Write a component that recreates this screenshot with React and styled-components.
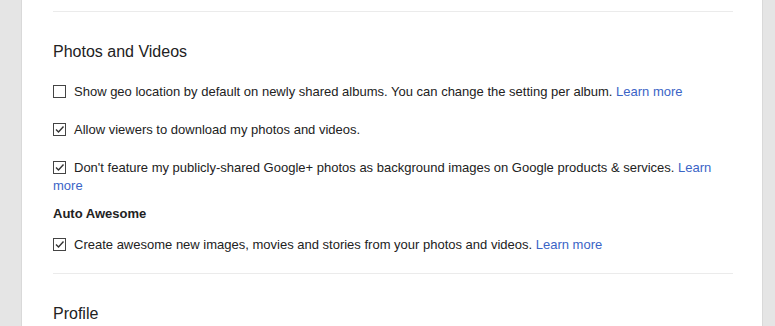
import React from 'react';
import styled, { createGlobalStyle } from 'styled-components';

const GlobalStyle = createGlobalStyle`
  html, body {
    margin: 0;
    padding: 0;
    background: #e5e5e5;
    font-family: Arial, "Liberation Sans", sans-serif;
  }
`;

const Panel = styled.div`
  margin-left: 21px;
  width: 742px;
  height: 326px;
  overflow: hidden;
  background: #fff;
  border-left: 1px solid #d9d9d9;
  border-right: 1px solid #d9d9d9;
  padding: 11px 29px 0 31px;
  box-sizing: border-box;
`;

const Divider = styled.div`
  height: 1px;
  background: #ebebeb;
`;

const Section = styled.section`
  padding: 30px 0 ${(p) => (p.$last ? 0 : 19)}px;
`;

const Heading = styled.h2`
  margin: 0 0 21px;
  font-size: 16px;
  line-height: 20px;
  font-weight: normal;
  color: #222;
`;

const Row = styled.div`
  font-size: 13px;
  line-height: 18px;
  color: #222;
  margin-bottom: ${(p) => p.$gap ?? 20}px;
`;

const SubLabel = styled.div`
  font-size: 13px;
  line-height: 18px;
  font-weight: bold;
  color: #222;
  margin-bottom: 13px;
`;

const Box = styled.span`
  display: inline-block;
  width: 11px;
  height: 11px;
  border: 1px solid #444;
  margin-right: 8px;
  vertical-align: -2px;
  position: relative;
  background: #fff;

  svg {
    position: absolute;
    left: 0;
    top: 0;
  }
`;

const Link = styled.a`
  color: #3b64c6;
  text-decoration: none;
`;

function Checkbox({ checked }) {
  return (
    <Box>
      {checked && (
        <svg width="11" height="11" viewBox="0 0 11 11">
          <path d="M2 5.5 L4.5 8 L9.5 2.5" fill="none" stroke="#333" strokeWidth="1.4" />
        </svg>
      )}
    </Box>
  );
}

export default function App() {
  return (
    <>
      <GlobalStyle />
      <Panel>
        <Divider />
        <Section>
          <Heading>Photos and Videos</Heading>
          <Row>
            <Checkbox />
            Show geo location by default on newly shared albums. You can change the setting per album.{' '}
            <Link href="#">Learn more</Link>
          </Row>
          <Row>
            <Checkbox checked />
            Allow viewers to download my photos and videos.
          </Row>
          <Row $gap={10}>
            <Checkbox checked />
            Don't feature my publicly-shared Google+ photos as background images on Google products &amp; services.{' '}
            <Link href="#">Learn more</Link>
          </Row>
          <SubLabel>Auto Awesome</SubLabel>
          <Row $gap={0}>
            <Checkbox checked />
            Create awesome new images, movies and stories from your photos and videos.{' '}
            <Link href="#">Learn more</Link>
          </Row>
        </Section>
        <Divider />
        <Section $last>
          <Heading>Profile</Heading>
        </Section>
      </Panel>
    </>
  );
}
